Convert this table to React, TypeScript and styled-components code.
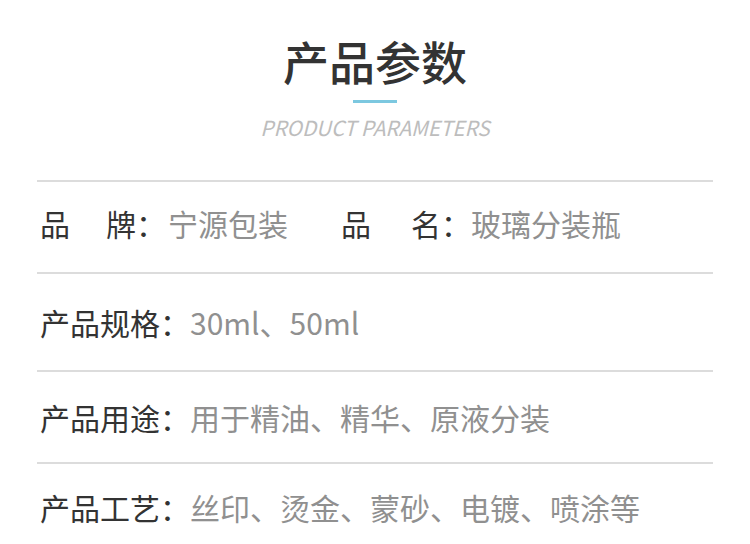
import React from "react";
import styled, { createGlobalStyle } from "styled-components";

const Global = createGlobalStyle`
  html, body { margin: 0; padding: 0; background: #fff; }
  body { font-family: "Noto Sans CJK SC", "Noto Sans", sans-serif; }
`;

const Page = styled.div`
  width: 750px;
  height: 544px;
  overflow: hidden;
  background: #fff;
`;

const Header = styled.header`
  display: flex;
  flex-direction: column;
  align-items: center;
  padding-top: 29px;
`;

const Title = styled.h1`
  margin: 0;
  font-size: 46px;
  line-height: 62px;
  font-weight: 500;
  color: #333;
`;

const Accent = styled.div`
  width: 44px;
  height: 3px;
  background: #7cc8e0;
  margin-top: 9px;
`;

const Subtitle = styled.div`
  margin-top: 11px;
  font-size: 20.7px;
  line-height: 26px;
  font-style: italic;
  font-weight: 400;
  color: #bdbdbd;
`;

const Table = styled.div`
  margin: 40px 37px 0;
  border-top: 2px solid #dcdcdc;
`;

const Row = styled.div<{ $h: number; $lift?: number }>`
  display: flex;
  align-items: center;
  box-sizing: content-box;
  height: ${(p) => p.$h - (p.$lift ?? 0)}px;
  padding: 0 0 ${(p) => p.$lift ?? 0}px 3px;
  border-bottom: 2px solid #dcdcdc;
  font-size: 30px;
  &:last-child { border-bottom: none; }
`;

const Cell = styled.div<{ $w?: number }>`
  display: flex;
  align-items: center;
  ${(p) => (p.$w ? `width: ${p.$w}px;` : "")}
`;

const Label = styled.span`
  color: #333;
  white-space: pre;
`;

const Value = styled.span<{ $gap?: number }>`
  color: #909090;
  margin-left: ${(p) => p.$gap ?? 0}px;
`;

const Spaced = styled.span<{ $gap: number }>`
  display: inline-block;
  margin-right: ${(p) => p.$gap}px;
`;

export default function App() {
  return (
    <Page>
      <Global />
      <Header>
        <Title>产品参数</Title>
        <Accent />
        <Subtitle>PRODUCT PARAMETERS</Subtitle>
      </Header>
      <Table>
        <Row $h={90} $lift={8}>
          <Cell $w={301}>
            <Label>
              <Spaced $gap={36}>品</Spaced>牌：
            </Label>
            <Value $gap={2}>宁源包装</Value>
          </Cell>
          <Cell>
            <Label>
              <Spaced $gap={40}>品</Spaced>名：
            </Label>
            <Value>玻璃分装瓶</Value>
          </Cell>
        </Row>
        <Row $h={96}>
          <Label>产品规格：</Label>
          <Value>30ml、50ml</Value>
        </Row>
        <Row $h={90}>
          <Label>产品用途：</Label>
          <Value>用于精油、精华、原液分装</Value>
        </Row>
        <Row $h={90} $lift={4}>
          <Label>产品工艺：</Label>
          <Value>丝印、烫金、蒙砂、电镀、喷涂等</Value>
        </Row>
      </Table>
    </Page>
  );
}
